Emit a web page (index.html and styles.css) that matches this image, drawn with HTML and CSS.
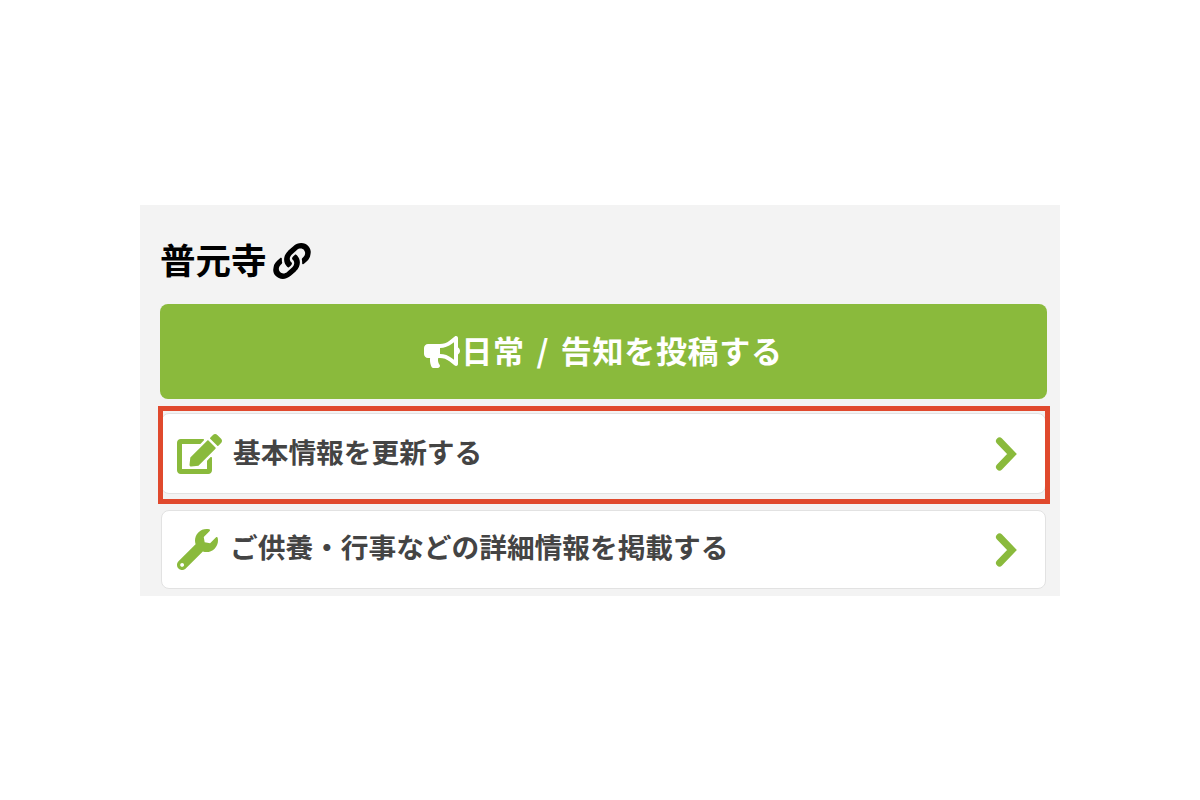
FILE: index.html
```html
<!DOCTYPE html>
<html lang="ja">
<head>
<meta charset="utf-8">
<title>普元寺</title>
<link rel="stylesheet" href="styles.css">
</head>
<body>
<main class="panel">
  <h1 class="title"><span class="title-text">普元寺</span>
    <svg class="link-icon" viewBox="0 0 512 512"><path d="M326.612 185.391c59.747 59.809 58.927 155.698.36 214.59-.11.12-.24.25-.36.37l-67.2 67.2c-59.27 59.27-155.699 59.262-214.96 0-59.27-59.26-59.27-155.7 0-214.96l37.106-37.106c9.84-9.84 26.786-3.3 27.294 10.606.648 17.722 3.826 35.527 9.69 52.721 1.986 5.822.567 12.262-3.783 16.612l-13.087 13.087c-28.026 28.026-28.905 73.66-1.155 101.96 28.024 28.579 74.086 28.749 102.325.51l67.2-67.19c28.191-28.191 28.073-73.757 0-101.83-3.701-3.694-7.429-6.564-10.341-8.569a16.037 16.037 0 0 1-6.947-12.606c-.396-10.567 3.348-21.456 11.698-29.806l21.054-21.055c5.521-5.521 14.182-6.199 20.584-1.731a152.482 152.482 0 0 1 20.522 17.197zM467.547 44.449c-59.261-59.262-155.69-59.27-214.96 0l-67.2 67.2c-.12.12-.25.25-.36.37-58.566 58.892-59.387 154.781.36 214.59a152.454 152.454 0 0 0 20.521 17.196c6.402 4.468 15.064 3.789 20.584-1.731l21.054-21.055c8.35-8.35 12.094-19.239 11.698-29.806a16.037 16.037 0 0 0-6.947-12.606c-2.912-2.005-6.64-4.875-10.341-8.569-28.073-28.073-28.191-73.639 0-101.83l67.2-67.19c28.239-28.239 74.3-28.069 102.325.51 27.75 28.3 26.872 73.934-1.155 101.96l-13.087 13.087c-4.35 4.35-5.769 10.79-3.783 16.612 5.864 17.194 9.042 34.999 9.69 52.721.509 13.906 17.454 20.446 27.294 10.606l37.106-37.106c59.271-59.259 59.271-155.699.001-214.959z"/></svg>
  </h1>
  <a class="post-button">
    <svg class="horn-icon" viewBox="0 0 576 512"><path d="M576 240c0-23.63-12.95-44.04-32-55.12V32.01C544 23.26 537.02 0 512 0c-7.12 0-14.19 2.38-19.98 7.02l-85.03 68.03C364.28 109.19 310.66 128 256 128H64c-35.35 0-64 28.65-64 64v96c0 35.35 28.65 64 64 64h33.7c-1.39 10.48-2.18 21.14-2.18 32 0 39.77 9.26 77.35 25.56 110.94 5.19 10.69 16.52 17.06 28.4 17.06h74.28c26.05 0 41.69-29.84 25.9-50.56-16.4-21.52-26.15-48.36-26.15-77.44 0-11.11 1.62-21.79 4.41-32H256c54.66 0 108.28 18.81 150.98 52.95l85.03 68.03a32.023 32.023 0 0 0 19.98 7.02c24.92 0 32-22.78 32-32V295.13C563.05 284.04 576 263.63 576 240zm-96 141.42l-33.05-26.44C392.95 311.78 325.12 288 256 288v-96c69.12 0 136.95-23.78 190.95-66.98L480 98.58v282.84z"/></svg>
    <span class="post-label">日常 / 告知を投稿する</span>
  </a>
  <a class="menu-row row-first">
    <svg class="edit-icon" viewBox="0 0 576 512"><path d="M402.6 83.2l90.2 90.2c3.8 3.8 3.8 10 0 13.8L274.4 405.6l-92.8 10.3c-12.4 1.4-22.9-9.1-21.5-21.5l10.3-92.8L388.8 83.2c3.8-3.8 10-3.8 13.8 0zm162-22.9l-48.8-48.8c-15.2-15.2-39.9-15.2-55.2 0l-35.4 35.4c-3.8 3.8-3.8 10 0 13.8l90.2 90.2c3.8 3.8 10 3.8 13.8 0l35.4-35.4c15.2-15.3 15.2-40 0-55.2zM384 346.2V448H64V128h229.8c3.2 0 6.2-1.3 8.5-3.5l40-40c7.6-7.6 2.2-20.5-8.5-20.5H48C21.5 64 0 85.5 0 112v352c0 26.5 21.5 48 48 48h352c26.5 0 48-21.5 48-48V306.2c0-10.7-12.9-16-20.5-8.5l-40 40c-2.2 2.3-3.5 5.3-3.5 8.5z"/></svg>
    <span class="row-label">基本情報を更新する</span>
    <svg class="chevron" viewBox="0 0 24 36"><path d="M6.5 5L19 18L6.5 31"/></svg>
    <span class="highlight"></span>
  </a>
  <a class="menu-row row-second">
    <svg class="wrench-icon" viewBox="0 0 512 512"><path d="M507.73 109.1c-2.24-9.03-13.54-12.09-20.12-5.51l-74.36 74.36-67.88-11.31-11.31-67.88 74.36-74.36c6.62-6.62 3.43-17.9-5.66-20.16-47.38-11.74-99.55.91-136.58 37.93-39.64 39.64-50.55 97.1-34.05 147.2L18.74 402.76c-24.99 24.99-24.99 65.51 0 90.5 24.99 24.99 65.51 24.99 90.5 0l213.21-213.21c50.12 16.71 107.47 5.68 147.37-34.22 37.07-37.07 49.7-89.32 37.91-136.73zM64 472c-13.25 0-24-10.75-24-24 0-13.26 10.75-24 24-24s24 10.74 24 24c0 13.25-10.75 24-24 24z"/></svg>
    <span class="row-label row-label-up">ご供養・行事などの詳細情報を掲載する</span>
    <svg class="chevron" viewBox="0 0 24 36"><path d="M6.5 5L19 18L6.5 31"/></svg>
  </a>
</main>
</body>
</html>
```
FILE: styles.css
```css
* { box-sizing: border-box; }
html, body { margin: 0; padding: 0; background: #fff; }
body { font-family: "Noto Sans CJK JP", "Liberation Sans", sans-serif; height: 800px; overflow: hidden; }
.panel {
  width: 920px;
  height: 391px;
  margin: 205px auto 0;
  padding: 36px 13px 0 20px;
  background: #f3f3f3;
  display: flex;
  flex-direction: column;
}
.title {
  margin: 0;
  height: 40px;
  display: flex;
  align-items: center;
  gap: 7px;
  font-size: 35.5px;
  font-weight: 700;
  line-height: 40px;
  color: #000;
}
.title-text { padding-bottom: 5px; }
.link-icon { width: 36px; height: 36px; fill: #000; transform: skewX(-6deg); }
.post-button {
  margin-top: 23px;
  height: 95px;
  border-radius: 8px;
  background: #8aba3c;
  color: #fff;
  display: flex;
  align-items: center;
  justify-content: center;
  gap: 1px;
  font-size: 31px;
  font-weight: 700;
}
.post-label { padding-bottom: 5px; word-spacing: 4px; letter-spacing: 0.7px; }
.horn-icon { width: 36px; height: 36px; fill: #fff; }
.menu-row {
  position: relative;
  height: 79px;
  margin: 0 1px;
  padding: 0 28px 0 15px;
  display: flex;
  align-items: center;
  background: #fff;
  border: 1.5px solid #e2e2e2;
  border-radius: 8px;
  color: #444;
  font-size: 27.7px;
  font-weight: 700;
}
.row-first { margin-top: 14px; height: 81px; }
.row-second { margin-top: 16px; }
.edit-icon { width: 45px; height: 40px; fill: #8aba3c; flex: none; margin-right: 11px; }
.wrench-icon { width: 41px; height: 41px; fill: #8aba3c; flex: none; margin-right: 12px; }
.row-label { flex: 1; padding-bottom: 5px; }
.row-label-up { padding-bottom: 7px; }
.chevron { width: 24px; height: 36px; fill: none; stroke: #8aba3c; stroke-width: 7; stroke-linecap: round; stroke-linejoin: miter; flex: none; }
.highlight {
  position: absolute;
  left: -4.5px;
  right: -4.5px;
  top: -8.5px;
  bottom: -10.5px;
  border: 5px solid #e0492d;
}
```
